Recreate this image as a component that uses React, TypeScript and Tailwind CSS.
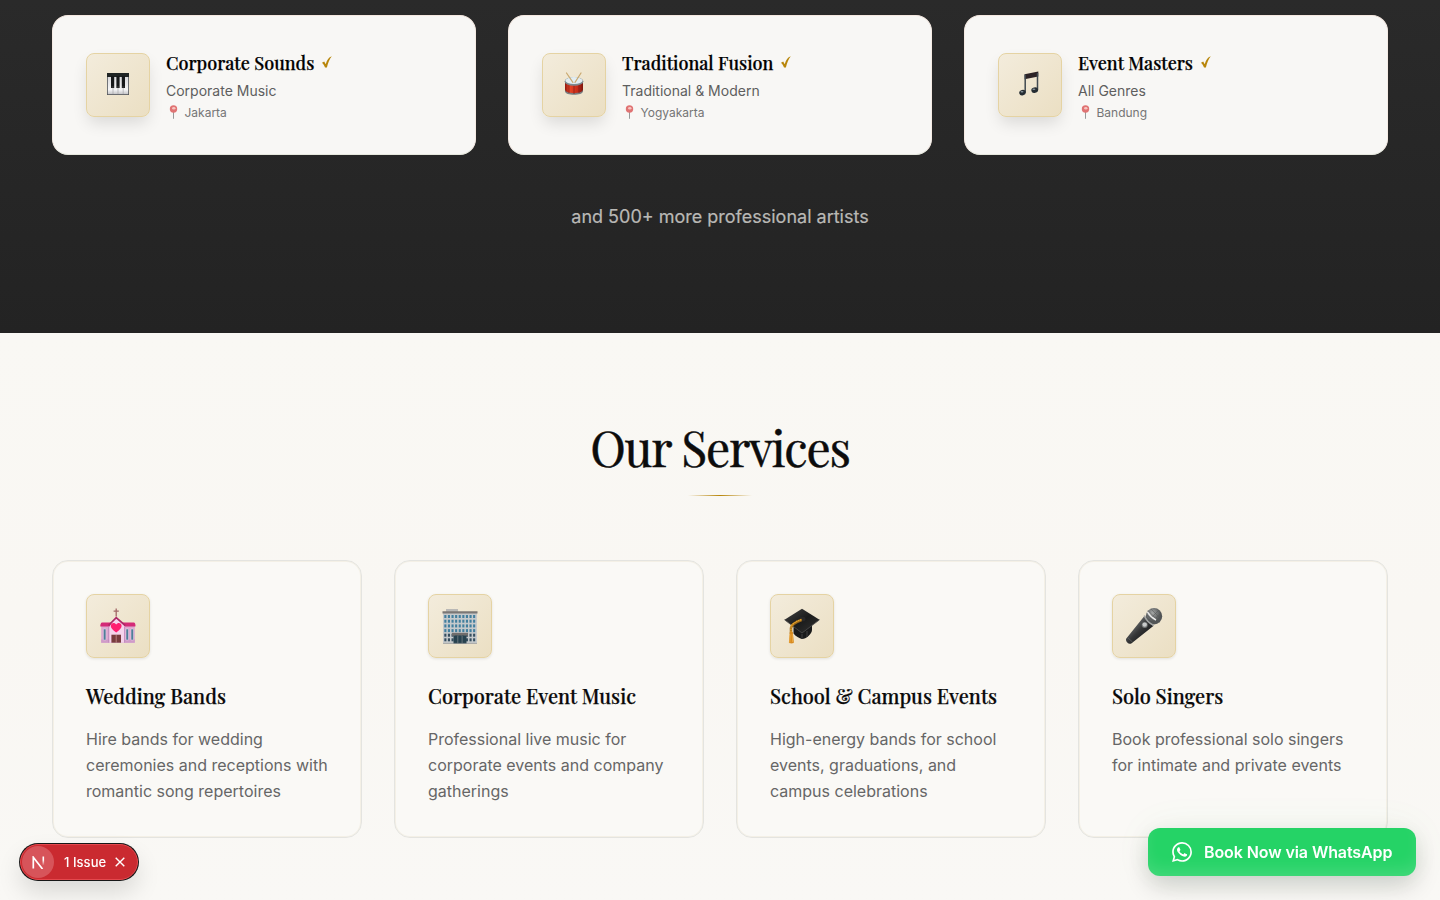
import React from "react";

const inter = "font-['Inter','Liberation_Sans',sans-serif]";
const serif = "font-['Playfair_Display','Liberation_Serif',serif]";

function Piano() {
  return (
    <svg className="mb-[2px] h-[22px] w-[22px]" viewBox="0 0 22 22">
      <defs>
        <linearGradient id="keys" x1="0" y1="0" x2="0" y2="1">
          <stop offset="0" stopColor="#d8d8da" />
          <stop offset="0.75" stopColor="#f5f5f6" />
          <stop offset="1" stopColor="#c5c5c8" />
        </linearGradient>
      </defs>
      <rect x="0" y="0" width="22" height="22" fill="#53565a" />
      <rect x="0.8" y="3" width="20.4" height="18.2" fill="url(#keys)" />
      <path d="M6 4v17M11 4v17M16.2 4v17" stroke="#a0a0a3" strokeWidth=".6" />
      <path d="M0 0h22v4H0z" fill="#202524" />
      <path d="M4 3h3.2v12H4zM9.4 3h3.2v12H9.4zM14.8 3H18v12h-3.2z" fill="#17191a" />
      <path d="M4.5 14h2.2M9.9 14h2.2M15.3 14h2.2" stroke="#555" strokeWidth=".7" />
    </svg>
  );
}

function Drum() {
  return (
    <svg className="mb-[3px] h-[23px] w-[20px]" viewBox="0 0 20 23">
      <defs>
        <linearGradient id="drum">
          <stop offset="0" stopColor="#8e170f" />
          <stop offset=".25" stopColor="#e94627" />
          <stop offset=".7" stopColor="#c72c19" />
          <stop offset="1" stopColor="#7d1710" />
        </linearGradient>
      </defs>
      <path d="M1 9v9.3c0 5 18 5 18 0V9z" fill="url(#drum)" />
      <path d="M1 17.5c0 4.8 18 4.8 18 0v1.7c0 4.8-18 4.8-18 0z" fill="#797f82" />
      <path d="M5 12v9M10 13v9M15 12v9" stroke="#8c201a" strokeWidth=".8" />
      <ellipse cx="10" cy="9.4" rx="9.4" ry="4.3" fill="#7c8b91" />
      <ellipse cx="10" cy="8.6" rx="8.7" ry="3.5" fill="#e2edf2" />
      <path d="M2.5 1l6.4 9.4M17 1l-6 9.4" stroke="#c9a86f" strokeWidth="1.2" strokeLinecap="round" />
    </svg>
  );
}

function Notes() {
  return (
    <svg className="mr-[2px] mb-[3px] h-[25px] w-[20px]" viewBox="0 0 20 25">
      <path d="M5.6 3.2L19.300 .5v5L5.600 8.200z" fill="#2d2326" />
      <path d="M6.200 3.500v18M18.500 2v17" stroke="#414a51" strokeWidth="1.500" />
      <ellipse cx="3.500" cy="21.600" rx="3.300" ry="2.700" fill="#252d33" transform="rotate(-15 3.500 21.600)" />
      <ellipse cx="15.700" cy="19.200" rx="3.400" ry="2.700" fill="#252d33" transform="rotate(-15 15.700 19.200)" />
      <ellipse cx="3" cy="20.800" rx="1.500" ry=".8" fill="#8d9aa2" />
      <ellipse cx="14.900" cy="18.300" rx="1.500" ry=".8" fill="#8d9aa2" />
    </svg>
  );
}

function Pin() {
  return (
    <svg className="mb-[2px] ml-[3px] h-[14px] w-[9px] opacity-75" viewBox="0 0 9 14">
      <path d="M4.5 6v7.4" stroke="#777a7c" strokeWidth="1" strokeLinecap="round" />
      <circle cx="4.5" cy="4" r="3.7" fill="#d94848" />
      <ellipse cx="4.8" cy="3.2" rx="1.7" ry="1.2" fill="#f7b5b0" />
    </svg>
  );
}

function Church() {
  return (
    <svg className="h-[36px] w-[36px]" viewBox="0 0 36 36">
      <path d="M16.2.5v8M13.6 3.2h5.2" stroke="#a16868" strokeWidth="1.3" />
      <path d="M1.2 18h33.6v16.7H1.2z" fill="#dda9d0" />
      <path d="M1.2 31.5h33.6v3.2H1.2z" fill="#cf9bc8" />
      <path d="M9.5 16L16 9.800l8 6.200v18.700H9.500z" fill="#f5d3ec" />
      <path d="M2 14.500h10l-2.500 4H.400c-.500-1 .500-4 1.600-4zM22 14.500h11.800c1.500 0 2 3 1.500 4H25z" fill="#d42a77" />
      <path d="M8.500 17.500L16.200 9.600l9 7.900" fill="none" stroke="#ad2967" strokeWidth="1.700" />
      <path d="M16.200 24.500c-3.500-2.800-5.400-4.300-5.400-6.600 0-3.200 4-4 5.400-1.300 1.400-2.700 5.400-1.900 5.400 1.300 0 2.300-1.900 3.800-5.400 6.600z" fill="#ff1e70" />
      <path d="M3.400 21h2.500v11H3.400zM26 21h2.500v11H26zM31 21h2.500v11H31z" fill="#4e7e98" stroke="#eed5ec" strokeWidth=".5" />
      <path d="M11.400 26.700h9.600v8h-9.600z" fill="#783c3e" />
      <path d="M16.200 27v7.700" stroke="#d19a99" strokeWidth=".7" />
      <path d="M8.500 19v15.500M24.500 19v15.500" stroke="#bc87ba" strokeWidth=".7" />
    </svg>
  );
}

function Building() {
  const rows = [6, 10.7, 15.4, 20.1, 24.7, 29.3];
  const cols = [1.6, 5.2, 8.8, 12.4, 16, 19.6, 23.2, 26.8, 30.4];
  return (
    <svg className="h-[35px] w-[36px]" viewBox="0 0 36 35">
      <path d="M4 0h12v3H4z" fill="#b9b8b6" />
      <path d="M1 4h34v30.700H1z" fill="#c6cacc" />
      <path d="M.5 2.200h35v2.200H.5z" fill="#7b7775" />
      {rows.map((y, r) =>
        cols.map((x) => <rect key={`${x}-${y}`} x={x + 0.7} y={y} width="2.1" height="3" fill={r < 4 ? "#427f9e" : "#354e5f"} />)
      )}
      <path d="M10 23.800h16v3H10z" fill="#706d6c" />
      <path d="M11.500 26.500h13v8.200h-13z" fill="#27424f" />
      <path d="M15.800 27v7.500M20.100 27v7.500" stroke="#94999b" strokeWidth=".6" />
      <path d="M1 34.400h34" stroke="#9a9a98" strokeWidth=".7" />
    </svg>
  );
}

function Cap() {
  return (
    <svg className="h-[36px] w-[36px]" viewBox="0 0 36 36">
      <defs>
        <linearGradient id="cap" x1="0" y1="0" x2="1" y2="1">
          <stop offset="0" stopColor="#454545" />
          <stop offset=".5" stopColor="#1b1c1c" />
          <stop offset="1" stopColor="#333" />
        </linearGradient>
      </defs>
      <path d="M9.500 17v8.500c2 3 6 4.500 8.500 5.500 4 0 10-5 10-9v-6z" fill="#191a1b" />
      <path d="M18 26v5M23 23v6" stroke="#353536" strokeWidth="1.500" />
      <path d="M.5 11.800L18 .800l17.500 11L18 25z" fill="url(#cap)" />
      <path d="M.5 11.800L18 25l17.500-13.200" fill="none" stroke="#4e4e4e" strokeWidth=".8" />
      <ellipse cx="18.500" cy="11" rx="3" ry="2.300" fill="#29292a" />
      <path d="M17.500 12c-5 2-10 4-10.500 8v6" fill="none" stroke="#9a6617" strokeWidth="2.500" />
      <path d="M17.500 11.500c-5 2-10 4-10.500 8v6" fill="none" stroke="#e7a42b" strokeWidth="1.500" strokeDasharray="1.5 .6" />
      <path d="M5.800 24h3l1.100 10.500c-1 1.200-4 1.200-5 0z" fill="#d78b22" />
      <path d="M6.200 26.500l-.4 8M8.200 26l.4 8" stroke="#f2af42" strokeWidth=".8" />
    </svg>
  );
}

function Mic() {
  return (
    <svg className="h-[38px] w-[38px]" viewBox="0 0 38 38">
      <defs>
        <linearGradient id="body" x1="0" y1="0" x2="1" y2="1">
          <stop offset=".2" stopColor="#777a7b" />
          <stop offset=".5" stopColor="#353637" />
          <stop offset=".8" stopColor="#161718" />
        </linearGradient>
        <radialGradient id="grille" cx=".4" cy=".3">
          <stop offset="0" stopColor="#a4a6a6" />
          <stop offset="1" stopColor="#525556" />
        </radialGradient>
      </defs>
      <path d="M1.300 31.500L19 9.500 28.300 19 6.300 36.500c-2.200 1.500-6.500-2.500-5-5z" fill="url(#body)" />
      <circle cx="29" cy="9.300" r="8.200" fill="url(#grille)" />
      <path d="M23 3.500l11.500 12M26 2l10 10M22 8l9 9M24 13L34 3M27 15L36 6" stroke="#545757" strokeWidth=".5" />
      <path d="M22.500 5c2 3.500 4.500 6 8.500 8" fill="none" stroke="#ededed" strokeWidth="1.500" />
      <path d="M19.300 8.500c1.500 4.500 4.800 7.600 9.500 10" fill="none" stroke="#a3a5a5" strokeWidth="1.500" />
      <circle cx="19.700" cy="18" r="3" fill="#727575" />
      <circle cx="19.700" cy="17.600" r="2.200" fill="#c8caca" />
      <path d="M2.500 30.500l5 4.500" stroke="#606364" strokeWidth=".8" />
    </svg>
  );
}

const artists = [
  { name: "Corporate Sounds", genre: "Corporate Music", city: "Jakarta", Icon: Piano },
  { name: "Traditional Fusion", genre: "Traditional & Modern", city: "Yogyakarta", Icon: Drum },
  { name: "Event Masters", genre: "All Genres", city: "Bandung", Icon: Notes },
];

const services = [
  { name: "Wedding Bands", lines: ["Hire bands for wedding", "ceremonies and receptions with", "romantic song repertoires"], Icon: Church },
  { name: "Corporate Event Music", lines: ["Professional live music for", "corporate events and company", "gatherings"], Icon: Building },
  { name: "School & Campus Events", lines: ["High-energy bands for school", "events, graduations, and", "campus celebrations"], Icon: Cap },
  { name: "Solo Singers", lines: ["Book professional solo singers", "for intimate and private events"], Icon: Mic },
];

const tile = "flex h-16 w-16 shrink-0 items-center justify-center rounded-lg border border-[#e5d3a3] bg-linear-to-br from-[#f3ecdc] to-[#ebdfc3]";

export default function App() {
  return (
    <div className={`${inter} h-[900px] w-[1440px] overflow-hidden bg-[#faf9f5]`}>
      <section className="h-[333px] bg-linear-to-b from-[#2a2a2a] to-[#232323] px-[52px] pt-[15px]">
        <div className="grid grid-cols-3 gap-8">
          {artists.map(({ name, genre, city, Icon }) => (
            <article key={name} className="flex h-[140px] gap-4 rounded-2xl border border-x-[#f5ebe4] border-t-[#f5e8e0] border-b-[#e6e8de] bg-[#f8f7f5] px-[33px] pt-[37px]">
              <div className={`${tile} shadow-[0_8px_16px_-2px_rgba(0,0,0,0.12)]`}><Icon /></div>
              <div>
                <div className="flex h-5 items-center gap-2">
                  <h3 className={`${serif} text-lg leading-5 font-medium whitespace-nowrap text-black [-webkit-text-stroke:0.25px_#000]`}>{name}</h3>
                  <svg className="mb-[2px] h-[12px] w-[10px]" viewBox="0 0 10 12">
                    <path d="M0 6.700l2.200-1.200 1.500 2.700C5 4 6.700 1.200 9.800.2 7.500 3 6 7 4.900 11.400H3C2.200 9.200 1.300 7.800 0 6.700z" fill="#b8860b" />
                  </svg>
                </div>
                <p className="mt-[8px] text-sm leading-5 text-[#5e5e5e]">{genre}</p>
                <p className="mt-[4px] flex h-4 items-center gap-[6.5px] text-xs leading-4 text-[#757575]"><Pin />{city}</p>
              </div>
            </article>
          ))}
        </div>
        <p className="mt-[48px] text-center text-lg leading-7 text-[#b9b8b5] [-webkit-text-stroke:0.2px_#b9b8b5]">and 500+ more professional artists</p>
      </section>

      <section className="h-[567px] bg-linear-to-b from-[#f9f8f4] via-[#f9f7f3] to-[#f9f8f5] px-[52px] pt-[82px]">
        <h2 className={`${serif} text-center text-5xl leading-[64px] font-normal tracking-[-1.2px] text-[#0c0c0c] [-webkit-text-stroke:0.5px_#0c0c0c]`}>Our Services</h2>
        <div className="mx-auto mt-[16px] h-px w-16 bg-linear-to-r from-transparent via-[#b8860b] to-transparent" />
        <div className="mt-[64px] grid grid-cols-4 gap-8">
          {services.map(({ name, lines, Icon }) => (
            <article key={name} className="h-[278px] rounded-2xl border border-[#e4e4e0] bg-[#faf9f6] px-[33px] pt-[33px] shadow-[inset_0_0_0_1px_#f4f0e6]">
              <div className={`${tile} shadow-[0_1px_3px_rgba(0,0,0,0.1)]`}><Icon /></div>
              <h3 className={`${serif} mt-6 text-xl leading-7 font-medium whitespace-nowrap text-[#090909] [-webkit-text-stroke:0.25px_#090909]`}>{name}</h3>
              <p className="mt-4 text-base leading-[26px] whitespace-nowrap text-[#666]">
                {lines.map((l) => <span key={l} className="block">{l}</span>)}
              </p>
            </article>
          ))}
        </div>
      </section>

      <aside className="fixed bottom-5 left-5 flex h-9 w-[118px] items-center rounded-full border border-[#e5484d] bg-[#ca2a30] pl-[1px] text-white shadow-[0_0_0_1px_#171717,0_12px_24px_rgba(0,0,0,0.13)]">
        <span className="flex h-8 w-8 items-center justify-center rounded-full bg-[#d7545a]">
          <svg className="h-[13px] w-[13px]" viewBox="0 0 13 13" fill="none">
            <defs><linearGradient id="nfade" x1="0" y1="0" x2="0" y2="1"><stop offset=".4" stopColor="white" /><stop offset="1" stopColor="white" stopOpacity="0" /></linearGradient></defs>
            <path d="M1.300 12.500V1.300L10.500 13" stroke="white" strokeWidth="1.700" />
            <path d="M10.500 .5h1.600v9h-1.600z" fill="url(#nfade)" />
          </svg>
        </span>
        <span className="ml-[10px] text-[13px] leading-4 font-medium tracking-[0.05px] whitespace-nowrap">1 Issue</span>
        <svg className="ml-[9px] h-[10px] w-[10px]" viewBox="0 0 10 10"><path d="M.7.7l8.600 8.600M9.300.7L.7 9.300" stroke="white" strokeWidth="1.4" /></svg>
      </aside>

      <button className="fixed right-6 bottom-6 flex h-12 w-[268px] items-center gap-3 rounded-xl bg-[#25d366] pl-6 text-base font-semibold tracking-[-0.09px] whitespace-nowrap text-white shadow-[0_10px_24px_rgba(0,0,0,0.16),0_0_40px_rgba(37,211,102,0.06),inset_0_-10px_16px_-4px_rgba(255,255,255,0.14)]">
        <svg className="h-5 w-5" viewBox="0 0 24 24" fill="currentColor">
          <path d="M17.472 14.382c-.297-.149-1.758-.867-2.030-.967-.273-.099-.471-.148-.670.150-.197.297-.767.966-.940 1.164-.173.199-.347.223-.644.075-.297-.150-1.255-.463-2.390-1.475-.883-.788-1.480-1.761-1.653-2.059-.173-.297-.018-.458.130-.606.134-.133.298-.347.446-.520.149-.174.198-.298.298-.497.099-.198.050-.371-.025-.520-.075-.149-.669-1.612-.916-2.207-.242-.579-.487-.500-.669-.510-.173-.008-.371-.010-.570-.010-.198 0-.520.074-.792.372-.272.297-1.040 1.016-1.040 2.479 0 1.462 1.065 2.875 1.213 3.074.149.198 2.096 3.200 5.077 4.487.709.306 1.262.489 1.694.625.712.227 1.360.195 1.871.118.571-.085 1.758-.719 2.006-1.413.248-.694.248-1.289.173-1.413-.074-.124-.272-.198-.570-.347m-5.421 7.403h-.004a9.870 9.870 0 01-5.031-1.378l-.361-.214-3.741.982.998-3.648-.235-.374a9.860 9.860 0 01-1.510-5.260c.001-5.450 4.436-9.884 9.888-9.884 2.640 0 5.122 1.030 6.988 2.898a9.825 9.825 0 012.893 6.994c-.003 5.450-4.437 9.884-9.885 9.884m8.413-18.297A11.815 11.815 0 0012.050 0C5.495 0 .160 5.335.157 11.892c0 2.096.547 4.142 1.588 5.945L.057 24l6.305-1.654a11.882 11.882 0 005.683 1.448h.005c6.554 0 11.890-5.335 11.893-11.893a11.821 11.821 0 00-3.480-8.413z" />
        </svg>
        Book Now via WhatsApp
      </button>
    </div>
  );
}
